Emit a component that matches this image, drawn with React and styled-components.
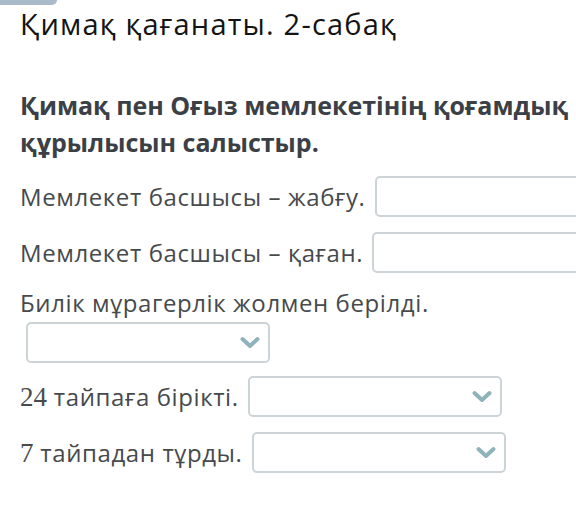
import React from 'react';
import styled, { createGlobalStyle } from 'styled-components';

const Global = createGlobalStyle`
  html, body {
    margin: 0;
    padding: 0;
    background: #ffffff;
    overflow: hidden;
  }
  body {
    font-family: 'Open Sans', 'Noto Sans', sans-serif;
  }
`;

const Page = styled.div`
  width: 640px;
  display: flex;
  flex-direction: column;
`;
const Tab = styled.div`
  width: 57px;
  height: 5px;
  background-color: #a9bacb;
  border-bottom-right-radius: 8px;
`;
const Title = styled.h1`
  margin: 0 0 0 20px;
  font-size: 29px;
  line-height: 38px;
  letter-spacing: 1.2px;
  font-weight: 400;
  color: #141414;
`;
const Question = styled.div`
  margin: 44px 0 0 20px;
  width: 556px;
  font-size: 25px;
  line-height: 37px;
  font-weight: 700;
  color: #3b4046;
`;
const List = styled.div`
  margin: 15px 0 0 20px;
  display: flex;
  flex-direction: column;
  gap: 15px;
`;
const Row = styled.div`
  display: flex;
  align-items: center;
  gap: 9px;
`;
const Block = styled.div`
  display: flex;
  flex-direction: column;
  gap: 3px;
  margin-top: -1px;
  margin-bottom: -2px;
`;
const Label = styled.span`
  font-size: 24px;
  line-height: 32px;
  letter-spacing: 0.6px;
  color: #474a4d;
  white-space: nowrap;
`;
const Num = styled.span`
  font-family: 'Liberation Serif', 'DejaVu Serif', serif;
  font-size: 27px;
  letter-spacing: 0;
`;
const TextBox = styled.div`
  width: 252px;
  height: 41px;
  box-sizing: border-box;
  border: 2px solid #cdd4d8;
  border-radius: 5px;
  background: #ffffff;
`;
const Select = styled.div`
  width: ${(props) => props.w || 254}px;
  height: 41px;
  box-sizing: border-box;
  border: 2px solid #cdd4d8;
  border-radius: 5px;
  background: #ffffff;
  display: flex;
  align-items: center;
  justify-content: flex-end;
  padding-right: 8px;
  margin-left: ${(props) => props.indent || 0}px;
`;

const Chevron = () => (
  <svg width="20" height="14" viewBox="0 0 20 14">
    <path
      d="M2.5 3 L10 10 L17.5 3"
      fill="none"
      stroke="#8fb2bb"
      strokeWidth="4"
      strokeLinecap="round"
      strokeLinejoin="round"
    />
  </svg>
);

const App = () => (
  <Page>
    <Global />
    <Tab />
    <Title>Қимақ қағанаты. 2-сабақ</Title>
    <Question>Қимақ пен Оғыз мемлекетінің қоғамдық құрылысын салыстыр.</Question>
    <List>
      <Row>
        <Label>Мемлекет басшысы – жабғу.</Label>
        <TextBox />
      </Row>
      <Row>
        <Label>Мемлекет басшысы – қаған.</Label>
        <TextBox />
      </Row>
      <Block>
        <Label>Билік мұрагерлік жолмен берілді.</Label>
        <Select w={244} indent={6}>
          <Chevron />
        </Select>
      </Block>
      <Row>
        <Label>
          <Num>24</Num> тайпаға бірікті.
        </Label>
        <Select>
          <Chevron />
        </Select>
      </Row>
      <Row>
        <Label>
          <Num>7</Num> тайпадан тұрды.
        </Label>
        <Select>
          <Chevron />
        </Select>
      </Row>
    </List>
  </Page>
);

export default App;
